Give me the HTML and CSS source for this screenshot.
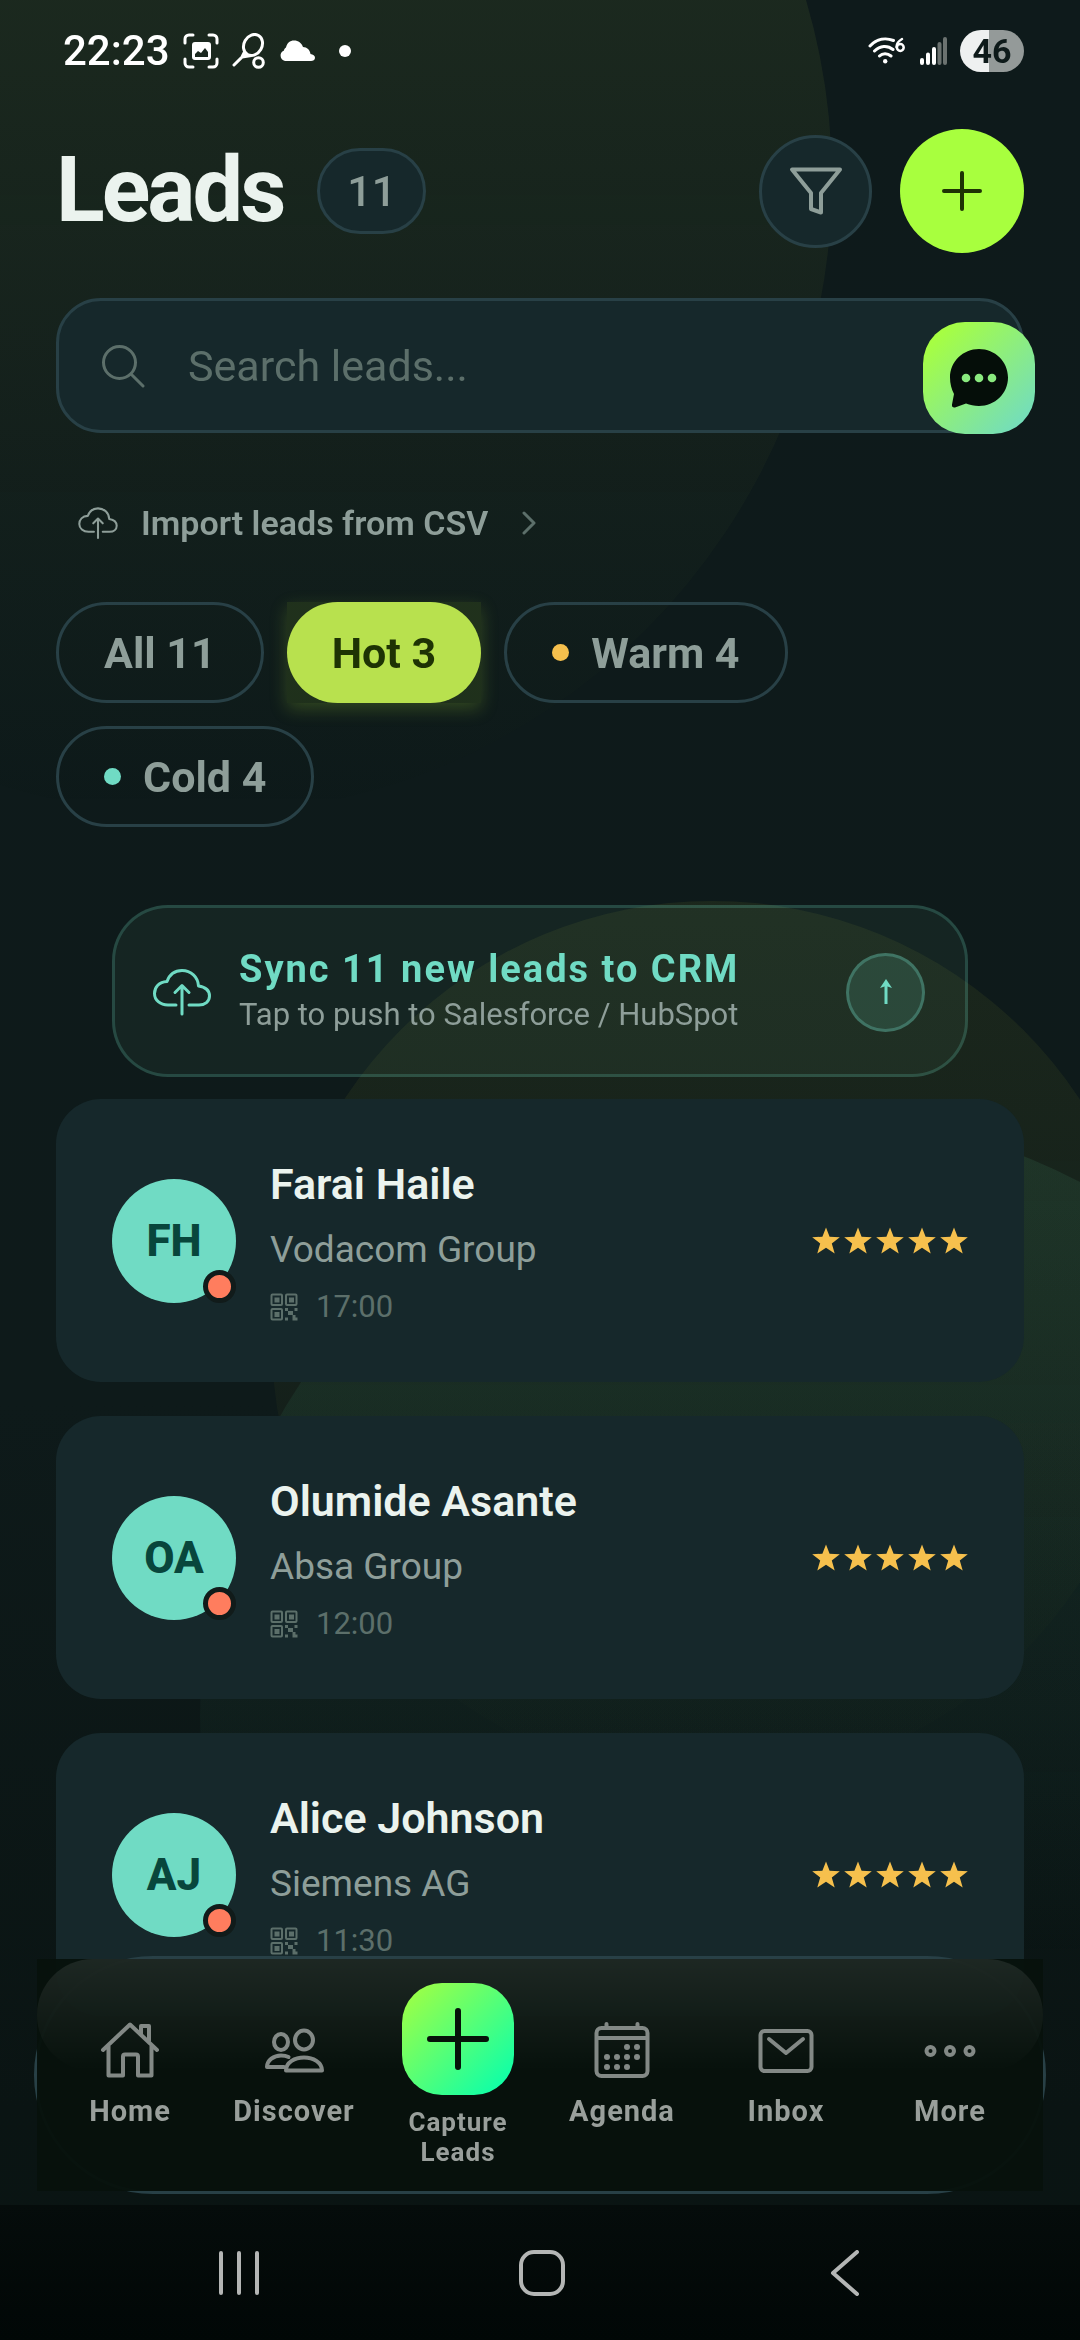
FILE: index.html
```html
<!DOCTYPE html>
<html lang="en">
<head>
<meta charset="utf-8">
<meta name="viewport" content="width=device-width, initial-scale=1">
<title>Leads</title>
<link rel="stylesheet" href="styles.css">
</head>
<body>
<svg class="sprite" aria-hidden="true">
  <symbol id="star" viewBox="0 0 28 28"><path d="M14 .5l3.600 9.200 10.200.5-8 6.200 2.900 10.100L14 20.800l-8.700 5.700 2.900-10.100-8-6.200 10.200-.5z"/></symbol>
  <symbol id="cloud-up" viewBox="0 0 60 50"><g fill="none" stroke="currentColor" stroke-width="3" stroke-linecap="round" stroke-linejoin="round"><path d="M24 38H16C8 38 2.500 33 2.500 26.500 2.500 20 7 15 15 14.500 17.500 7.500 23 3.500 30 3.500c9 0 16 6.500 16.500 15.500C53 20 57.500 23.500 57.500 29c0 5.500-4.500 9-10.500 9H37"/><path d="M30 47V19M23 25.500l7-7 7 7"/></g></symbol>
  <symbol id="qr" viewBox="0 0 28 28"><g fill="none" stroke="currentColor" stroke-width="2"><rect x="1.500" y="1.500" width="10.500" height="10.500" rx="1"/><rect x="16" y="1.500" width="10.500" height="10.500" rx="1"/><rect x="1.500" y="16" width="10.500" height="10.500" rx="1"/></g><g fill="currentColor"><path d="M4.500 4.500h5v5h-5zM19 4.500h5v5h-5zM4.500 19h5v5h-5zM15 15h3v3h-3zM18 18h5v4h-5zM24.500 15h3v3h-3zM15 24.500h3v3h-3zM22.500 22h3v2.500h2v3h-5z"/></g></symbol>
</svg>

<div class="backdrop" aria-hidden="true">
  <span class="orb orb-lime"></span>
  <span class="orb orb-olive"></span>
  <span class="orb orb-teal"></span>
</div>

<header class="status">
  <div class="status-side">
    <span class="clock">22:23</span>
    <svg width="36" height="36" viewBox="0 0 36 36" fill="none" stroke="#fff" stroke-width="3" stroke-linecap="round"><path d="M2 10V6a4 4 0 0 1 4-4h4M26 2h4a4 4 0 0 1 4 4v4M34 26v4a4 4 0 0 1-4 4h-4M10 34H6a4 4 0 0 1-4-4v-4"/><path fill="#fff" fill-rule="evenodd" stroke="none" d="M12 9h13a3 3 0 0 1 3 3v12a3 3 0 0 1-3 3H12a3 3 0 0 1-3-3V12a3 3 0 0 1 3-3zm0 15h13v-5l-3-4-4 5-3-2-3 3z"/></svg>
    <svg width="34" height="36" viewBox="0 0 34 36" fill="none" stroke="#fff" stroke-width="3" stroke-linecap="round"><ellipse cx="21" cy="12" rx="9" ry="11" transform="rotate(30 21 12)"/><path d="M12 20l-2 4-8 8M12 20l4 3-6 1"/><circle cx="26.500" cy="29.500" r="4.800"/></svg>
    <svg width="36" height="22" viewBox="0 0 36 22" fill="#fff"><path d="M6 21a5.500 5.500 0 0 1-1-10.500C5 9 6 8 7 7.500 8 3 11 .5 15 .5c4.500 0 7.500 2.500 9 6.500 4 .2 7 3 7.500 7 2.500.3 4.500 1.500 4.500 3.700S34 21 32 21z"/></svg>
    <span class="status-dot"></span>
  </div>
  <div class="status-side status-right">
    <svg width="38" height="28" viewBox="0 0 38 28" fill="none" stroke="#fff" stroke-width="3" stroke-linecap="round"><path d="M2 9C9 1.500 18 .5 25.500 3.500M6.500 14c5.500-5.500 13-6 18.500-1.500M11.500 19c3-3 8-3 11.500 0"/><circle cx="17.200" cy="24.200" r="2.200" fill="#fff" stroke="none"/><path stroke-width="2.500" d="M34 2c-3.500 2-5.500 5-5.500 8"/><circle cx="32.300" cy="10.500" r="3.400" stroke-width="2.500"/></svg>
    <svg width="28" height="30" viewBox="0 0 28 30" stroke-width="4" stroke-linecap="round"><path stroke="#fff" d="M3 24v3M9 18.500v8.500M15 13v14"/><path stroke="#6b7270" d="M20.500 8v19M26 3v24"/></svg>
    <span class="battery">46</span>
  </div>
</header>

<main class="page">
  <div class="title-row">
    <h1>Leads</h1>
    <span class="count">11</span>
    <button class="round filter" aria-label="Filter leads"><svg width="54" height="48" viewBox="0 0 54 48" fill="none" stroke="#8e9e99" stroke-width="4" stroke-linejoin="round"><path d="M3 2.500h48L32 26v19.500L22 42V26z"/></svg></button>
    <button class="round add" aria-label="Add lead"><svg width="40" height="40" viewBox="0 0 40 40" stroke="#1e3304" stroke-width="4" stroke-linecap="round"><path d="M20 2v36M2 20h36"/></svg></button>
  </div>

  <label class="search">
    <svg width="44" height="44" viewBox="0 0 44 44" fill="none" stroke="#5c6f6a" stroke-width="3" stroke-linecap="round"><circle cx="18.500" cy="18.500" r="16"/><path d="M30 30l12 12"/></svg>
    <input type="search" placeholder="Search leads..." aria-label="Search leads">
  </label>

  <a class="import" href="#import">
    <svg width="42" height="34"><use href="#cloud-up"/></svg>
    <span>Import leads from CSV</span>
    <svg class="chevron" width="16" height="24" viewBox="0 0 16 24" fill="none" stroke="#5c6f6a" stroke-width="3" stroke-linecap="round" stroke-linejoin="round"><path d="M3 2l10 10L3 22"/></svg>
  </a>

  <div class="chips" role="group" aria-label="Lead temperature">
    <button class="chip">All 11</button>
    <button class="chip chip-hot" aria-pressed="true">Hot 3</button>
    <button class="chip"><i class="dot dot-warm"></i>Warm 4</button>
    <button class="chip"><i class="dot dot-cold"></i>Cold 4</button>
  </div>

  <section class="sync">
    <svg class="sync-cloud" width="60" height="50"><use href="#cloud-up"/></svg>
    <div class="sync-text">
      <h2>Sync 11 new leads to CRM</h2>
      <p>Tap to push to Salesforce / HubSpot</p>
    </div>
    <button class="sync-go" aria-label="Sync now"><svg width="14" height="26" viewBox="0 0 14 26" fill="none" stroke="#70dbc4" stroke-width="3"><path d="M7 25V3"/><path fill="#70dbc4" stroke="none" d="M7 0l6 9-6-2-6 2z"/></svg></button>
  </section>

  <ul class="leads">
    <li class="lead">
      <div class="avatar">FH<i class="heat"></i></div>
      <div class="info">
        <h3>Farai Haile</h3>
        <p class="company">Vodacom Group</p>
        <p class="time"><svg width="28" height="28"><use href="#qr"/></svg>17:00</p>
      </div>
      <div class="stars" role="img" aria-label="5 stars"><svg><use href="#star"/></svg><svg><use href="#star"/></svg><svg><use href="#star"/></svg><svg><use href="#star"/></svg><svg><use href="#star"/></svg></div>
    </li>
    <li class="lead">
      <div class="avatar">OA<i class="heat"></i></div>
      <div class="info">
        <h3>Olumide Asante</h3>
        <p class="company">Absa Group</p>
        <p class="time"><svg width="28" height="28"><use href="#qr"/></svg>12:00</p>
      </div>
      <div class="stars" role="img" aria-label="5 stars"><svg><use href="#star"/></svg><svg><use href="#star"/></svg><svg><use href="#star"/></svg><svg><use href="#star"/></svg><svg><use href="#star"/></svg></div>
    </li>
    <li class="lead">
      <div class="avatar">AJ<i class="heat"></i></div>
      <div class="info">
        <h3>Alice Johnson</h3>
        <p class="company">Siemens AG</p>
        <p class="time"><svg width="28" height="28"><use href="#qr"/></svg>11:30</p>
      </div>
      <div class="stars" role="img" aria-label="5 stars"><svg><use href="#star"/></svg><svg><use href="#star"/></svg><svg><use href="#star"/></svg><svg><use href="#star"/></svg><svg><use href="#star"/></svg></div>
    </li>
  </ul>
</main>

<button class="chat" aria-label="Open chat"><svg width="60" height="60" viewBox="0 0 60 60"><path fill="#050e09" d="M30 1C46 1 59 13.500 59 29.500S46 58 30 58c-5 0-9-1-13-2.500L6 59.500c-2 .5-3.500-1-3-3L5 46C2.500 41 1 36 1 29.500 1 13.500 14 1 30 1z"/><g fill="#8aea7f"><circle cx="17" cy="30" r="4.300"/><circle cx="30" cy="30" r="4.300"/><circle cx="43" cy="30" r="4.300"/></g></svg></button>

<footer class="dock">
  <nav class="tabs" aria-label="Main">
    <a class="tab" href="#home">
      <svg width="60" height="56" viewBox="0 0 60 56" fill="none" stroke="currentColor" stroke-width="4" stroke-linecap="round" stroke-linejoin="round"><path d="M3 28L30 2.500 57 28M8.500 24v29.500H23V34.500a2 2 0 0 1 2-2h11a2 2 0 0 1 2 2v19h13.500V24M41 12V4h8v15"/></svg>
      <span>Home</span>
    </a>
    <a class="tab" href="#discover">
      <svg width="60" height="56" viewBox="0 0 60 56" fill="none" stroke="currentColor" stroke-width="4" stroke-linecap="round" stroke-linejoin="round"><ellipse cx="17" cy="20" rx="7" ry="8"/><ellipse cx="40" cy="18" rx="9" ry="9.500"/><path d="M20 45H3C3 38 10 33.500 17 33.500c3 0 5.500.5 7.500 1.500M22 48.500C22 40 31 35.500 40 35.500s18 4.500 18 13z"/></svg>
      <span>Discover</span>
    </a>
    <a class="tab tab-capture" href="#capture">
      <b class="capture"><svg width="62" height="62" viewBox="0 0 62 62" stroke="#06120a" stroke-width="6" stroke-linecap="round"><path d="M31 3v56M3 31h56"/></svg></b>
      <span>Capture Leads</span>
    </a>
    <a class="tab" href="#agenda">
      <svg width="56" height="56" viewBox="0 0 56 56" fill="none" stroke="currentColor" stroke-width="4" stroke-linecap="round"><rect x="2.500" y="6" width="51" height="48" rx="5"/><path d="M3 16h50M12.500 2v3M43.500 2v3"/><g fill="currentColor" stroke="none"><circle cx="33" cy="25" r="3"/><circle cx="43" cy="25" r="3"/><circle cx="13" cy="35" r="3"/><circle cx="23" cy="35" r="3"/><circle cx="33" cy="35" r="3"/><circle cx="43" cy="35" r="3"/><circle cx="13" cy="45" r="3"/><circle cx="23" cy="45" r="3"/><circle cx="33" cy="45" r="3"/></g></svg>
      <span>Agenda</span>
    </a>
    <a class="tab" href="#inbox">
      <svg width="56" height="56" viewBox="0 0 56 56" fill="none" stroke="currentColor" stroke-width="4" stroke-linecap="round" stroke-linejoin="round"><rect x="2.500" y="9" width="51" height="40" rx="4"/><path d="M11 17l17 14 17-14"/></svg>
      <span>Inbox</span>
    </a>
    <a class="tab" href="#more">
      <svg width="56" height="56" viewBox="0 0 56 56" fill="none" stroke="currentColor" stroke-width="4"><circle cx="8.500" cy="29" r="4"/><circle cx="28" cy="29" r="4"/><circle cx="47.500" cy="29" r="4"/></svg>
      <span>More</span>
    </a>
  </nav>
  <div class="system">
    <button aria-label="Recents"><svg width="46" height="46" viewBox="0 0 46 46" stroke="#b4b6b5" stroke-width="4" stroke-linecap="round"><path d="M5 3v40M23 3v40M41 3v40"/></svg></button>
    <button aria-label="Home screen"><svg width="46" height="46" viewBox="0 0 46 46" fill="none" stroke="#b4b6b5" stroke-width="4"><rect x="2" y="2" width="42" height="42" rx="13"/></svg></button>
    <button aria-label="Back"><svg width="46" height="46" viewBox="0 0 46 46" fill="none" stroke="#b4b6b5" stroke-width="4" stroke-linecap="round" stroke-linejoin="round"><path d="M35 2L11 23l24 21"/></svg></button>
  </div>
</footer>
</body>
</html>
```
FILE: styles.css
```css
* { box-sizing: border-box; }

:root {
  --panel: #16282b;
  --line: #284046;
  --mint: #70dbc4;
  --lime: #a8ff3e;
  --muted: #8e9e99;
  --faint: #5c6f6a;
}

body {
  margin: 0;
  min-height: 100vh;
  background: linear-gradient(#0e1a1b 0%, #0e1a1a 60%, #0a1413 90%, #0a1513 100%);
  color: #ebf3ee;
  font-family: Roboto, "Noto Sans", sans-serif;
}

h1, h2, h3, p, ul { margin: 0; padding: 0; }
ul { list-style: none; }
button { margin: 0; padding: 0; border: 0; background: none; font: inherit; color: inherit; }
a { color: inherit; text-decoration: none; }
svg { display: block; flex: none; }
.sprite { position: absolute; width: 0; height: 0; }

/* Decorative circles behind the content */
.backdrop { position: fixed; inset: 0; overflow: hidden; z-index: -1; }
.orb { position: absolute; border-radius: 50%; }
.orb-lime {
  left: -440px; top: -456px; width: 1272px; height: 1272px;
  background: linear-gradient(rgba(150, 175, 65, .1) 35%, rgba(150, 175, 65, .08) 50%, rgba(150, 175, 65, .03) 78%, rgba(150, 175, 65, 0));
}
.orb-olive {
  left: 272px; top: 901px; width: 880px; height: 880px;
  background: linear-gradient(rgba(150, 160, 50, .1), rgba(150, 160, 50, .06) 50%, rgba(150, 160, 50, 0));
}
.orb-teal {
  left: 200px; top: 1114px; width: 1204px; height: 1204px;
  background: linear-gradient(rgba(70, 160, 120, .14), rgba(70, 150, 110, .1) 25%, rgba(70, 150, 120, .06) 50%, rgba(70, 150, 120, 0) 70%);
}

/* Phone status bar */
.status { display: flex; justify-content: space-between; align-items: center; height: 101px; padding: 0 56px 0 63px; color: #fff; }
.status-side { display: flex; align-items: center; gap: 13px; }
.clock { font-size: 42px; font-weight: 500; line-height: 48px; }
.status-dot { width: 12px; height: 12px; margin-left: 11px; border-radius: 50%; background: #fff; }
.battery {
  width: 64px; height: 42px; border-radius: 21px; text-align: center;
  background: linear-gradient(90deg, #eef0f0 46%, #949a99 46%);
  color: #0e1a1a; font-size: 34px; font-weight: 700; line-height: 42px;
}

.page { padding: 28px 56px 320px; }

.title-row { display: flex; align-items: center; }
h1 { font-size: 90px; font-weight: 700; line-height: 112px; letter-spacing: -3px; }
.count {
  display: grid; place-items: center; height: 86px; padding: 0 27px; margin: 0 auto 0 34px;
  border: 3px solid var(--line); border-radius: 43px; background: var(--panel);
  color: var(--muted); font-size: 43px; font-weight: 500;
}
.round { display: grid; place-items: center; border-radius: 50%; }
.filter { width: 113px; height: 113px; margin-right: 28px; border: 3px solid var(--line); background: var(--panel); }
.add { width: 124px; height: 124px; background: var(--lime); }

.search {
  display: flex; align-items: center; gap: 43px; height: 135px; margin-top: 45px; padding: 0 42px;
  border: 3px solid var(--line); border-radius: 45px; background: var(--panel);
}
.search input {
  flex: 1; min-width: 0; padding: 0; border: 0; outline: 0; background: none;
  color: #ebf3ee; font: 400 43px/54px Roboto, "Noto Sans", sans-serif;
}
.search input::placeholder { color: var(--faint); opacity: 1; }

.import {
  display: flex; align-items: center; width: max-content; height: 90px; margin: 45px 0 34px; padding-left: 21px; gap: 22px;
  color: var(--muted); font-size: 34px; font-weight: 600;
}
.chevron { margin-left: 11px; }

.chips { display: flex; flex-wrap: wrap; gap: 23px; }
.chip {
  position: relative; display: flex; align-items: center; height: 101px; padding: 0 45px;
  border: 3px solid var(--line); border-radius: 51px;
  color: var(--muted); font-size: 43px; font-weight: 700;
}
.chip-hot { border: 0; background: #b8e14e; color: #1e3304; }
.chip-hot::before {
  content: ""; position: absolute; inset: 0; z-index: -1; background: rgba(80, 110, 30, .25);
  box-shadow: 0 6px 16px rgba(150, 200, 50, .25);
}
.dot { width: 17px; height: 17px; margin-right: 22px; border-radius: 50%; }
.dot-warm { background: #f6c04d; }
.dot-cold { background: var(--mint); }

.sync {
  display: flex; align-items: center; min-height: 172px; margin: 78px 56px 22px; padding: 2px 40px 0 37px;
  border: 3px solid rgba(112, 219, 196, .2); border-radius: 56px; background: rgba(130, 219, 170, .06);
}
.sync-cloud { margin-right: 27px; color: var(--mint); }
.sync-text { flex: 1; }
.sync h2 { color: var(--mint); font-size: 38px; font-weight: 700; line-height: 45px; letter-spacing: 2px; }
.sync p { color: var(--muted); font-size: 31px; line-height: 45px; }
.sync-go {
  display: grid; place-items: center; width: 79px; height: 79px; border-radius: 50%;
  border: 3px solid rgba(112, 219, 196, .3); background: rgba(112, 219, 196, .14);
}

.leads { display: flex; flex-direction: column; gap: 34px; }
.lead { display: flex; align-items: center; padding: 55px 56px 54px; border-radius: 45px; background: var(--panel); }
.avatar {
  position: relative; display: grid; place-items: center; width: 124px; height: 124px; margin-right: 34px;
  border-radius: 50%; background: var(--mint); color: #08463c; font-size: 44px; font-weight: 800;
}
.heat { position: absolute; right: 0; bottom: 0; width: 33px; height: 33px; border: 5px solid #111b1a; border-radius: 50%; background: #ff7d5e; }
.info { display: grid; flex: 1; gap: 12px; }
.info h3 { font-size: 43px; font-weight: 600; line-height: 60px; }
.company { color: var(--muted); font-size: 37px; line-height: 48px; }
.time { display: flex; align-items: center; gap: 18px; color: var(--faint); font-size: 31px; line-height: 42px; }
.stars { display: flex; gap: 4px; color: #f6c04d; }
.stars svg { width: 28px; height: 28px; fill: currentColor; }

/* Floating chat button */
.chat {
  position: fixed; top: 322px; right: 45px; display: grid; place-items: center; width: 112px; height: 112px;
  border-radius: 42px; background: linear-gradient(135deg, #a8ff3e 10%, #70dbc4 95%);
}

.dock { position: fixed; left: 0; right: 0; bottom: 0; }
.tabs {
  position: relative; display: flex; align-items: center; height: 238px; margin: 0 34px 11px; padding: 0 11px;
  border: 3px solid var(--line); border-radius: 119px; color: #838986;
}
.tabs::before { content: ""; position: absolute; inset: 0; background: rgba(7, 18, 12, .97); }
.tabs::after {
  content: ""; position: absolute; left: 0; right: 0; top: 0; height: 112px; border-radius: 56px;
  background: linear-gradient(rgba(255, 255, 255, .09), rgba(255, 255, 255, 0));
}
.tab { position: relative; z-index: 1; display: flex; flex: 1 1 0; flex-direction: column; align-items: center; gap: 16px; min-width: 0; text-align: center; }
.tab span { color: #999f9b; font-size: 29px; font-weight: 700; line-height: 34px; letter-spacing: 1px; }
.tab-capture { gap: 12px; }
.tab-capture span { max-width: 112px; font-size: 26px; line-height: 30px; }
.capture {
  display: grid; place-items: center; width: 112px; height: 112px; border-radius: 40px;
  background: linear-gradient(135deg, #a8ff3e, #00ffb2);
}

.system {
  display: grid; grid-template-columns: repeat(3, 1fr); place-items: center; height: 135px; padding: 0 84px 0 88px;
  background: linear-gradient(#050c0b, #010706);
}
```
